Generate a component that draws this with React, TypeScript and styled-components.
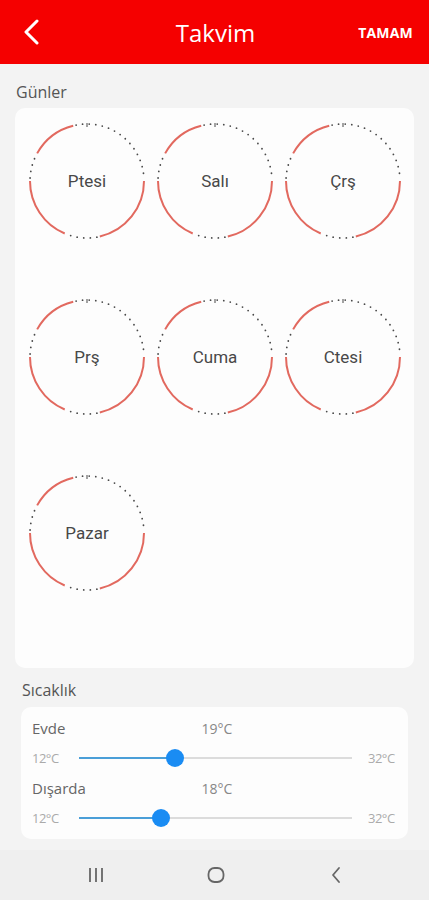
import styled, { createGlobalStyle } from "styled-components";

const GlobalStyle = createGlobalStyle`
  html, body {
    margin: 0;
    padding: 0;
    background: #f3f3f3;
    font-family: "Open Sans", "Noto Sans", sans-serif;
  }
`;

const Page = styled.div`
  width: 429px;
  height: 900px;
  display: flex;
  flex-direction: column;
  background: #f3f3f3;
  overflow: hidden;
`;

const Header = styled.div`
  height: 64px;
  background: #f50000;
  display: grid;
  grid-template-columns: 80px 1fr 80px;
  align-items: center;
  color: #fff;
`;

const BackButton = styled.div`
  padding-left: 22px;
  display: flex;
  align-items: center;
`;

const Title = styled.div`
  text-align: center;
  font-size: 24px;
  font-weight: 400;
  padding-left: 2px;
`;

const Done = styled.div`
  text-align: right;
  padding-right: 16px;
  font-size: 14px;
  font-weight: 700;
  letter-spacing: 0.2px;
`;

const Content = styled.div`
  flex: 1;
  display: flex;
  flex-direction: column;
  padding-top: 18px;
`;

const SectionLabel = styled.div<{ $indent: number; $top?: number }>`
  font-size: 16px;
  color: #555;
  padding-left: ${(p) => p.$indent}px;
  margin-top: ${(p) => p.$top ?? 0}px;
  height: 20px;
  line-height: 20px;
`;

const Card = styled.div<{ $margin: number }>`
  background: #fdfdfd;
  border-radius: 10px;
  margin: 0 ${(p) => p.$margin}px;
`;

const DaysCard = styled(Card)`
  margin-top: 6px;
  height: 560px;
  box-sizing: border-box;
  padding: 14px 12px 0 13px;
  display: grid;
  grid-template-columns: repeat(3, 118px);
  grid-auto-rows: 118px;
  column-gap: 10px;
  row-gap: 58px;
`;

const DayCell = styled.div`
  position: relative;
  width: 118px;
  height: 118px;
  display: flex;
  align-items: center;
  justify-content: center;
`;

const DayRing = styled.svg`
  position: absolute;
  inset: 0;
`;

const DayName = styled.span`
  position: relative;
  font-family: Roboto, "Noto Sans", sans-serif;
  font-size: 17px;
  color: #484848;
`;

const TempCard = styled(Card)`
  margin-top: 7px;
  padding: 10px 10px 2px 11px;
  display: flex;
  flex-direction: column;
`;

const TitleRow = styled.div`
  display: grid;
  grid-template-columns: 1fr auto 1fr;
  align-items: center;
  height: 22px;
`;

const RowName = styled.span`
  font-size: 15px;
  color: #666;
`;

const RowValue = styled.span`
  font-size: 14px;
  color: #888;
  margin-left: 4px;
`;

const SliderRow = styled.div`
  display: flex;
  align-items: center;
  height: 38px;
`;

const Bound = styled.span`
  font-size: 13px;
  color: #aaa;
  width: 30px;
  letter-spacing: -0.5px;
`;

const Track = styled.div`
  position: relative;
  flex: 1;
  height: 2px;
  margin: 0 16px 0 17px;
  background: #dcdcdc;
`;

const Fill = styled.div`
  position: absolute;
  left: 0;
  top: 0;
  height: 2px;
  background: #4a9fd8;
`;

const Thumb = styled.div`
  position: absolute;
  top: -8px;
  width: 18px;
  height: 18px;
  margin-left: -9px;
  border-radius: 50%;
  background: #1a8cf3;
`;

const NavBar = styled.div`
  height: 50px;
  background: #efefef;
  display: flex;
  align-items: center;
  justify-content: center;
  gap: 100px;
  padding-left: 2px;
`;

const NavIcon = styled.div`
  width: 20px;
  display: flex;
  justify-content: center;
`;

const days = ["Ptesi", "Salı", "Çrş", "Prş", "Cuma", "Ctesi", "Pazar"];

// segments in degrees, clockwise from 3 o'clock
const redSegments: [number, number][] = [
  [0, 77],
  [113, 180],
  [209, 256],
];
const dotSegments: [number, number][] = [
  [77, 113],
  [180, 209],
  [256, 360],
];

const R = 57;
const C = 59;

function arcPath(a0: number, a1: number) {
  const r0 = (a0 * Math.PI) / 180;
  const r1 = (a1 * Math.PI) / 180;
  const x0 = C + R * Math.cos(r0);
  const y0 = C + R * Math.sin(r0);
  const x1 = C + R * Math.cos(r1);
  const y1 = C + R * Math.sin(r1);
  const large = a1 - a0 > 180 ? 1 : 0;
  return `M ${x0} ${y0} A ${R} ${R} 0 ${large} 1 ${x1} ${y1}`;
}

const Ring = () => (
  <DayRing width="118" height="118" viewBox="0 0 118 118">
    {redSegments.map(([a, b]) => (
      <path key={a} d={arcPath(a, b)} fill="none" stroke="#e2695f" strokeWidth="2" />
    ))}
    {dotSegments.map(([a, b]) => (
      <path
        key={a}
        d={arcPath(a + 3, b - 2)}
        fill="none"
        stroke="#4a4a4a"
        strokeWidth="1.8"
        strokeLinecap="round"
        strokeDasharray="0 6.6"
      />
    ))}
    <line x1="59" y1="1" x2="59" y2="5" stroke="#666" strokeWidth="1.2" />
  </DayRing>
);

const TempSlider = ({ name, value }: { name: string; value: number }) => {
  const pct = ((value - 12) / 20) * 100;
  return (
    <>
      <TitleRow>
        <RowName>{name}</RowName>
        <RowValue>{value}°C</RowValue>
        <span />
      </TitleRow>
      <SliderRow>
        <Bound>12°C</Bound>
        <Track>
          <Fill style={{ width: `${pct}%` }} />
          <Thumb style={{ left: `${pct}%` }} />
        </Track>
        <Bound>32°C</Bound>
      </SliderRow>
    </>
  );
};

export default function App() {
  return (
    <Page>
      <GlobalStyle />
      <Header>
        <BackButton>
          <svg width="20" height="26" viewBox="0 0 20 26">
            <path d="M15 2 L4 13 L15 24" fill="none" stroke="#fff" strokeWidth="3" strokeLinecap="round" strokeLinejoin="round" />
          </svg>
        </BackButton>
        <Title>Takvim</Title>
        <Done>TAMAM</Done>
      </Header>
      <Content>
        <SectionLabel $indent={16}>Günler</SectionLabel>
        <DaysCard $margin={15}>
          {days.map((d) => (
            <DayCell key={d}>
              <Ring />
              <DayName>{d}</DayName>
            </DayCell>
          ))}
        </DaysCard>
        <SectionLabel $indent={22} $top={12}>Sıcaklık</SectionLabel>
        <TempCard $margin={21}>
          <TempSlider name="Evde" value={19} />
          <TempSlider name="Dışarda" value={18} />
        </TempCard>
      </Content>
      <NavBar>
        <NavIcon>
          <svg width="20" height="18" viewBox="0 0 20 18">
            <path d="M4 2 V16 M10 2 V16 M16 2 V16" stroke="#666" strokeWidth="1.8" />
          </svg>
        </NavIcon>
        <NavIcon>
          <svg width="20" height="20" viewBox="0 0 20 20">
            <rect x="2.5" y="3" width="15" height="14" rx="6" fill="none" stroke="#666" strokeWidth="1.8" />
          </svg>
        </NavIcon>
        <NavIcon>
          <svg width="16" height="20" viewBox="0 0 16 20">
            <path d="M11 3 L5 10 L11 17" fill="none" stroke="#666" strokeWidth="1.8" strokeLinecap="round" strokeLinejoin="round" />
          </svg>
        </NavIcon>
      </NavBar>
    </Page>
  );
}
